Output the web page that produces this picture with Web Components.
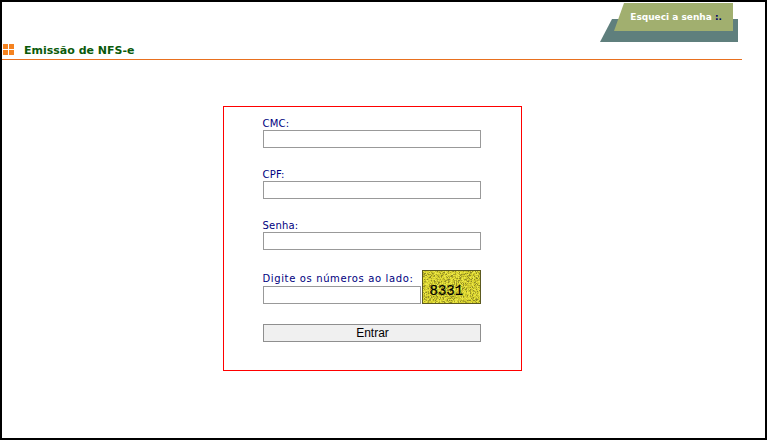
<!DOCTYPE html>
<html>
  <head>
    <title>Emissão de NFS-e</title>
    <style>
      body { margin: 0; background: #fff; }
    </style>
  </head>
  <body>
    <nfse-page>
      <nfse-header titulo="Emissão de NFS-e" link="Esqueci a senha"></nfse-header>
      <nfse-login>
        <nfse-field label="CMC:"></nfse-field>
        <nfse-field label="CPF:"></nfse-field>
        <nfse-field label="Senha:"></nfse-field>
        <nfse-captcha label="Digite os números ao lado:" codigo="8331"></nfse-captcha>
        <nfse-button>Entrar</nfse-button>
      </nfse-login>
    </nfse-page>
    <script>
      // Moldura da pagina
      class NfsePage extends HTMLElement {
        constructor() {
          super();
          this.attachShadow({ mode: "open" });
          this.shadowRoot.innerHTML = `
          <style>
            :host {
              display: block;
              box-sizing: border-box;
              width: 767px;
              height: 440px;
              border: 2px solid #000;
              font-family: "DejaVu Sans", Verdana, sans-serif;
              overflow: hidden;
            }
            .col { width: 740px; }
          </style>
          <div class="col"><slot></slot></div>
        `;
        }
      }

      // Cabecalho com a aba e o titulo
      class NfseHeader extends HTMLElement {
        constructor() {
          super();
          this.attachShadow({ mode: "open" });
          this.shadowRoot.innerHTML = `
          <style>
            :host {
              display: block;
              height: 57px;
              border-bottom: 1px solid #e8701f;
            }
            .top { display: flex; justify-content: flex-end; height: 41px; padding-right: 3px; }
            .aba { display: grid; width: 139px; height: 40px; }
            .aba > * { grid-area: 1 / 1; }
            svg { display: block; }
            .link {
              justify-self: end;
              margin: 8px 17px 0 0;
              font: bold 9px/14px "DejaVu Sans", Verdana, sans-serif;
              color: #fff;
              white-space: nowrap;
            }
            .link b { color: #000066; }
            .titulo { display: flex; align-items: center; height: 16px; }
            .quad { display: grid; grid-template-columns: 5px 5px; gap: 1px; margin: -4px 10px 0 1px; }
            .quad i { display: block; height: 5px; background: #f5821f; }
            h1 {
              margin: 0;
              font: bold 11px/14px "DejaVu Sans", Verdana, sans-serif;
              color: #0a5a0a;
            }
          </style>
          <div class="top">
            <div class="aba">
              <svg width="139" height="40" viewBox="0 0 139 40">
                <polygon points="12,17 138,17 138,40 0,40" fill="#5f7f7d"/>
                <polygon points="24,1 133,1 133,29 14,29" fill="#a1af6f"/>
              </svg>
              <span class="link"></span>
            </div>
          </div>
          <div class="titulo">
            <div class="quad"><i></i><i></i><i></i><i></i></div>
            <h1></h1>
          </div>
        `;
          this.shadowRoot.querySelector(".link").innerHTML =
            this.getAttribute("link") + " <b>:.</b>";
          this.shadowRoot.querySelector("h1").textContent = this.getAttribute("titulo");
        }
      }

      // Caixa vermelha do login
      class NfseLogin extends HTMLElement {
        constructor() {
          super();
          this.attachShadow({ mode: "open" });
          this.shadowRoot.innerHTML = `
          <style>
            :host { display: flex; justify-content: center; padding-top: 46px; }
            .caixa {
              box-sizing: border-box;
              width: 299px;
              height: 265px;
              border: 1px solid #ff0000;
              padding: 10px 40px 0 39px;
              display: flex;
              flex-direction: column;
            }
          </style>
          <div class="caixa"><slot></slot></div>
        `;
        }
      }

      class NfseField extends HTMLElement {
        constructor() {
          super();
          this.attachShadow({ mode: "open" });
          this.shadowRoot.innerHTML = `
          <style>
            :host { display: block; height: 51px; }
            label {
              display: block;
              height: 13px;
              font: 10px/14px "DejaVu Sans", Verdana, sans-serif;
              letter-spacing: 0.2px;
              color: #000080;
            }
            input {
              display: block;
              box-sizing: border-box;
              width: 218px;
              height: 18px;
              margin: 0;
              border: 1px solid #999;
              background: #fff;
            }
          </style>
          <label></label>
          <input type="text">
        `;
          this.shadowRoot.querySelector("label").textContent = this.getAttribute("label");
        }
      }

      class NfseCaptcha extends HTMLElement {
        constructor() {
          super();
          this.attachShadow({ mode: "open" });
          this.shadowRoot.innerHTML = `
          <style>
            :host { display: flex; align-items: flex-end; gap: 1px; height: 34px; }
            label {
              display: block;
              height: 15px;
              font: 10px/15px "DejaVu Sans", Verdana, sans-serif;
              color: #000080;
              letter-spacing: 0.63px;
              white-space: nowrap;
            }
            input {
              display: block;
              box-sizing: border-box;
              width: 158px;
              height: 18px;
              margin: 0;
              border: 1px solid #999;
              background: #fff;
            }
            .img {
              display: grid;
              box-sizing: border-box;
              width: 59px;
              height: 34px;
              border: 1px solid #5c5a20;
              overflow: hidden;
            }
            .img > * { grid-area: 1 / 1; }
            svg { display: block; }
            .cod {
              align-self: end;
              justify-self: start;
              margin: 0 0 5px 7px;
              font: 14px/14px "Liberation Mono", "Courier New", monospace;
              -webkit-text-stroke: 0.2px #000;
              color: #000;
            }
          </style>
          <div>
            <label></label>
            <input type="text">
          </div>
          <div class="img">
            <svg width="57" height="32" shape-rendering="crispEdges"></svg>
            <span class="cod"></span>
          </div>
        `;
          this.shadowRoot.querySelector("label").textContent = this.getAttribute("label");
          this.shadowRoot.querySelector(".cod").textContent = this.getAttribute("codigo");

          // Ruido da imagem do captcha, sempre com a mesma semente
          let semente = 8331;
          const sorteio = () => {
            semente = (semente * 16807) % 2147483647;
            return semente / 2147483647;
          };
          const cores = ["#e6e03a", "#d8d230", "#cfc92c", "#c4be2a", "#a9a328", "#8f8a26", "#ecE84a", "#d8d230"];
          let pontos = "";
          for (let y = 0; y < 32; y++) {
            for (let x = 0; x < 57; x++) {
              const cor = cores[Math.floor(sorteio() * cores.length)];
              const largura = sorteio() < 0.3 ? 2 : 1;
              pontos += `<rect x="${x}" y="${y}" width="${largura}" height="1" fill="${cor}"/>`;
            }
          }
          this.shadowRoot.querySelector("svg").innerHTML = pontos;
        }
      }

      class NfseButton extends HTMLElement {
        constructor() {
          super();
          this.attachShadow({ mode: "open" });
          this.shadowRoot.innerHTML = `
          <style>
            :host { display: block; margin-top: 20px; }
            button {
              display: block;
              box-sizing: border-box;
              width: 218px;
              height: 18px;
              margin: 0;
              padding: 0 0 0 2px;
              border: 1px solid #8f8f8f;
              background: #f0f0f0;
              color: #000;
              font: 12px/16px "Liberation Sans", Arial, sans-serif;
            }
          </style>
          <button type="button"><slot></slot></button>
        `;
        }
      }

      customElements.define("nfse-page", NfsePage);
      customElements.define("nfse-header", NfseHeader);
      customElements.define("nfse-login", NfseLogin);
      customElements.define("nfse-field", NfseField);
      customElements.define("nfse-captcha", NfseCaptcha);
      customElements.define("nfse-button", NfseButton);
    </script>
  </body>
</html>
